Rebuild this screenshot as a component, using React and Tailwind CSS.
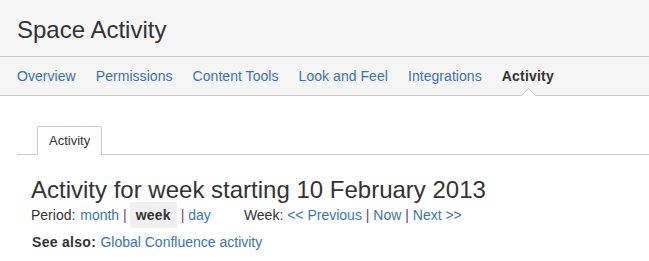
import React from "react";

const navItems = [
  "Overview",
  "Permissions",
  "Content Tools",
  "Look and Feel",
  "Integrations",
];

const App = () => {
  return (
    <div className="w-[649px] h-[261px] bg-white text-[#333] font-['Liberation_Sans',Arial,sans-serif] overflow-hidden">
      <div className="bg-[#f5f5f5] border-b border-[#ccc] h-[57px] px-[17px] pt-[15px]">
        <h1 className="text-[24px] leading-[30px]">Space Activity</h1>
      </div>
      <div className="bg-[#f5f5f5] border-b border-[#ccc] h-[39px] px-[7px] flex items-stretch">
        {navItems.map((item) => (
          <a
            key={item}
            href="#"
            className="px-[10px] flex items-center text-[14px] tracking-[0.05px] text-[#3b73af]"
          >
            {item}
          </a>
        ))}
        <span className="relative px-[10px] flex items-center text-[14px] tracking-[0.2px] font-bold text-[#333]">
          Activity
          <span className="absolute left-1/2 -ml-[5px] -bottom-[6px] w-[11px] h-[11px] rotate-45 bg-white border-l border-t border-[#ccc]"></span>
        </span>
      </div>

      <div className="pl-[17px] pt-[30px]">
        <div className="border-b border-[#ccc] flex pl-[20px]">
          <div className="-mb-px bg-white border border-b-0 border-[#ccc] h-[29px] px-[11px] flex items-center text-[13px] rounded-t-[2px]">
            Activity
          </div>
        </div>

        <div className="px-[14px] pt-[22px]">
          <h2 className="text-[24px] leading-[26px]">
            Activity for week starting 10 February 2013
          </h2>
          <div className="-mt-px h-[26px] flex items-center text-[14px] whitespace-pre">
            <span>Period: </span>
            <a href="#" className="ml-px text-[#3b73af]">month</a>
            <span className="text-[#6b3f7c]"> |</span>
            <span className="ml-[3px] h-[26px] px-[6px] flex items-center bg-[#f0f0f0] font-bold tracking-[0.2px]">week</span>
            <span className="text-[#6b3f7c] ml-[4px]">| </span>
            <a href="#" className="text-[#3b73af]">day</a>
            <span className="ml-[33px]">Week: </span>
            <a href="#" className="text-[#3b73af]">&lt;&lt; Previous</a>
            <span className="text-[#6b3f7c]"> | </span>
            <a href="#" className="text-[#3b73af]">Now</a>
            <span className="text-[#6b3f7c]"> | </span>
            <a href="#" className="text-[#3b73af]">Next &gt;&gt;</a>
          </div>
          <div className="mt-[4px] pl-px text-[14px] leading-[20px] whitespace-pre">
            <span className="font-bold tracking-[0.3px]">See also: </span>
            <a href="#" className="text-[#3b73af]">Global Confluence activity</a>
          </div>
        </div>
      </div>
    </div>
  );
};

export default App;
